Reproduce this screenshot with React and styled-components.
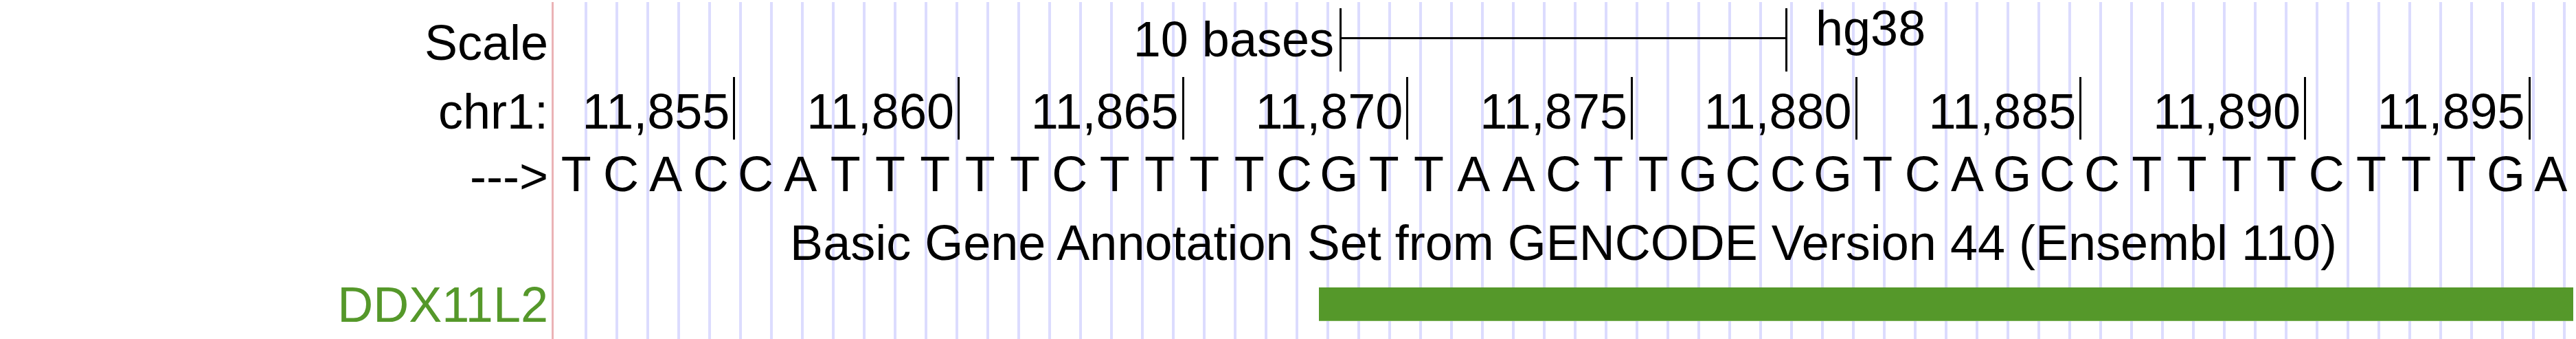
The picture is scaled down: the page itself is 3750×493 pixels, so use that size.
import React from "react";
import styled, { createGlobalStyle } from "styled-components";

const GlobalStyle = createGlobalStyle`
  html, body {
    margin: 0;
    padding: 0;
    background: #fff;
  }
  body {
    font-family: "Liberation Sans", Arial, Helvetica, sans-serif;
    color: #000;
  }
`;

const SEQUENCE = "TCACCATTTTTCTTTTCGTTAACTTGCCGTCAGCCTTTTCTTTGA";
const FIRST_TICK = 11855;
const GENE_GREEN = "#55982a";

const Browser = styled.div`
  display: grid;
  grid-template-columns: 803px 2947px;
  grid-template-rows: 105px 100px 87px 103px 98px;
  width: 3750px;
  height: 493px;
  overflow: hidden;
  font-size: 72px;
  line-height: 72px;
`;

// red base line + light blue guidelines behind the tracks
const Guides = styled.div`
  grid-column: 2;
  grid-row: 1 / -1;
  margin-top: 3px;
  background-image:
    linear-gradient(to right, #ebb3b6 0 3px, transparent 3px),
    repeating-linear-gradient(to right, #dcdcfe 0 4px, transparent 4px 45px);
  background-repeat: no-repeat;
  background-size: 100% 100%, calc(100% - 48px) 100%;
  background-position: 0 0, 48px 0;
`;

const Label = styled.div`
  grid-column: 1;
  grid-row: ${(p) => p.$row};
  justify-self: end;
  align-self: start;
  padding-right: 5px;
  margin-top: ${(p) => p.$top}px;
  color: ${(p) => p.$color || "#000"};
  white-space: nowrap;
`;

const Lane = styled.div`
  grid-column: 2;
  grid-row: ${(p) => p.$row};
  padding: 0 4px 0 3px;
  min-width: 0;
`;

const ScaleLane = styled(Lane)`
  display: grid;
  grid-template-columns: 1fr 652px 1fr;
  align-items: start;
`;

const ScaleText = styled.span`
  justify-self: end;
  margin: 21px 8px 0 0;
  white-space: nowrap;
`;

const ScaleBar = styled.div`
  box-sizing: border-box;
  height: 92px;
  margin-top: 12px;
  border-left: 3px solid #000;
  border-right: 3px solid #000;
`;

const ScaleLine = styled.div`
  height: 3px;
  margin-top: 42px;
  background: #000;
`;

const Assembly = styled.span`
  justify-self: start;
  margin: 5px 0 0 41px;
`;

const BaseGrid = styled(Lane)`
  display: grid;
  grid-template-columns: repeat(45, 1fr);
  align-items: start;
`;

const Tick = styled.div`
  grid-column: ${(p) => p.$start} / span ${(p) => p.$span};
  display: flex;
  justify-content: flex-end;
  align-items: flex-start;
  white-space: nowrap;
`;

const TickLabel = styled.span`
  margin: 21px 5px 0 0;
`;

const TickMark = styled.span`
  flex: none;
  width: 3px;
  height: 91px;
  margin: 7px -3px 0 0;
  background: #000;
`;

const Base = styled.span`
  margin-top: 12px;
  text-align: center;
`;

const TrackTitle = styled(Lane)`
  text-align: center;
  padding-top: 25px;
  white-space: nowrap;
`;

const GeneBar = styled.div`
  grid-column: ${(p) => p.$start} / -1;
  box-sizing: border-box;
  height: 49px;
  margin: 23px 0 0 3px;
  background: ${GENE_GREEN};
  border-bottom: 1px solid #7db35a;
`;

const ticks = [];
for (let pos = FIRST_TICK, col = 1; pos <= 11895; pos += 5) {
  const span = pos === FIRST_TICK ? 4 : 5;
  ticks.push({ pos, col, span });
  col += span;
}

const fmt = (n) => n.toLocaleString("en-US");

export default function App() {
  return (
    <>
      <GlobalStyle />
      <Browser>
        <Guides />

        <Label $row={1} $top={26}>Scale</Label>
        <ScaleLane $row={1}>
          <ScaleText>10 bases</ScaleText>
          <ScaleBar>
            <ScaleLine />
          </ScaleBar>
          <Assembly>hg38</Assembly>
        </ScaleLane>

        <Label $row={2} $top={21}>chr1:</Label>
        <BaseGrid $row={2}>
          {ticks.map((t) => (
            <Tick key={t.pos} $start={t.col} $span={t.span}>
              <TickLabel>{fmt(t.pos)}</TickLabel>
              <TickMark />
            </Tick>
          ))}
        </BaseGrid>

        <Label $row={3} $top={15}>---&gt;</Label>
        <BaseGrid $row={3}>
          {SEQUENCE.split("").map((b, i) => (
            <Base key={i}>{b}</Base>
          ))}
        </BaseGrid>

        <TrackTitle $row={4}>
          Basic Gene Annotation Set from GENCODE Version 44 (Ensembl 110)
        </TrackTitle>

        <Label $row={5} $top={12} $color={GENE_GREEN}>DDX11L2</Label>
        <BaseGrid $row={5}>
          <GeneBar $start={18} />
        </BaseGrid>
      </Browser>
    </>
  );
}
